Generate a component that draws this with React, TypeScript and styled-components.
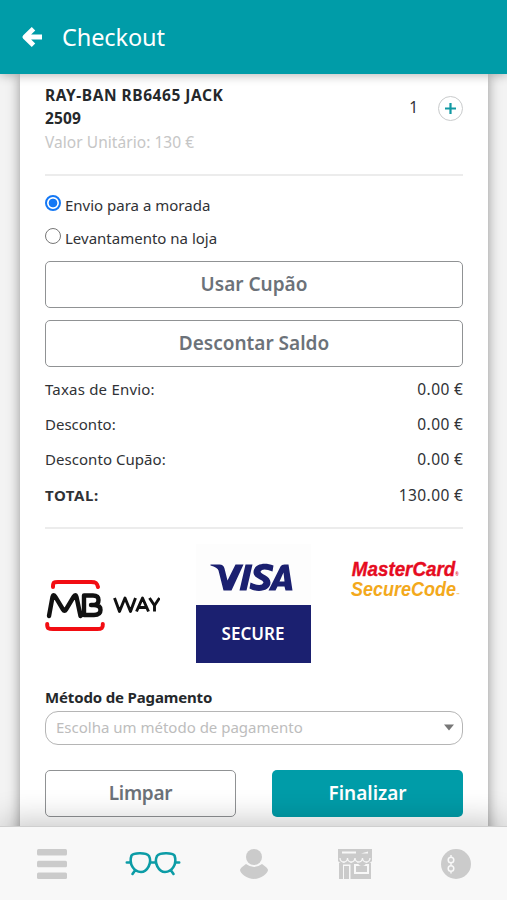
import React from "react";
import styled, { createGlobalStyle } from "styled-components";

const Global = createGlobalStyle`
  * { box-sizing: border-box; }
  body { margin: 0; background: #f4f4f4; font-family: "Noto Sans", "Open Sans", sans-serif; color: #303236; }
  button { font-family: inherit; }
`;
const Screen = styled.div`
  width: 507px; height: 900px; overflow: hidden;
  display: grid; grid-template-rows: 74px 752px 74px;
`;
const Header = styled.header`
  background: #009ca8; color: #fff; display: flex; align-items: center;
  padding-left: 21px; gap: 19px; z-index: 2; box-shadow: 0 1px 10px rgba(0,0,0,.3);
`;
const Title = styled.h1`
  margin: 0; font-size: 23.5px; font-weight: 400; line-height: 32px; letter-spacing: -.1px; padding-bottom: 1px;
`;
const Main = styled.main`
  padding: 0 19px 0 20px; overflow: hidden; background: #f3f3f3;
`;
const Card = styled.section`
  height: 800px; padding: 10px 25px 0; background: #fff;
  box-shadow: 0 0 12px rgba(0,0,0,.4);
`;
const Product = styled.div`
  display: flex; height: 70px; justify-content: space-between;
`;
const ProductName = styled.div`
  width: 200px; font-size: 15.5px; font-weight: 700; line-height: 23px; letter-spacing: .54px;
  white-space: nowrap; color: #25282b;
`;
const ModelCode = styled.div`letter-spacing: .1px;`;
const UnitPrice = styled.div`
  color: #c6c6c6; font-weight: 400; letter-spacing: .05px; padding-top: 1px;
`;
const Quantity = styled.div`
  display: flex; align-items: center; gap: 20px; height: 48px; font-size: 15.5px;
  span { margin-top: -2px; }
`;
const AddButton = styled.button`
  width: 25px; height: 25px; padding: 0; border: 1px solid #c9cbcc; border-radius: 50%;
  background: #fff; display: grid; place-items: center; margin-top: 1px;
`;
const Rule = styled.hr<{ $top: number; $bottom: number }>`
  height: 2px; border: 0; background: #ececec; margin: ${p => p.$top}px 0 ${p => p.$bottom}px;
`;
const Option = styled.label`
  display: flex; align-items: center; height: 33px; gap: 4px; font-size: 15px; padding-bottom: 1px;
`;
const Radio = styled.span<{ $checked?: boolean }>`
  width: 16px; height: 16px; border-radius: 50%; margin-top: -4px;
  border: ${p => (p.$checked ? "2px solid #1478f5" : "1px solid #777")};
  background: ${p => (p.$checked ? "radial-gradient(circle, #1478f5 0 4px, #fff 4.7px)" : "#fff")};
`;
const Button = styled.button<{ $primary?: boolean; $spacing?: number }>`
  display: flex; align-items: center; justify-content: center; width: 100%; height: 47px;
  padding: 0 0 2px; border-radius: 5px; font-size: 19px; font-weight: 600;
  letter-spacing: ${p => p.$spacing ?? 0}px;
  color: ${p => (p.$primary ? "#fff" : "#6c7279")};
  background: ${p => (p.$primary ? "#009ca8" : "transparent")};
  border: ${p => (p.$primary ? "0" : "1.5px solid #909294")};
`;
const Discounts = styled.div`
  display: grid; gap: 12px; padding-top: 6px;
`;
const Totals = styled.dl`
  margin: 4px 0 0; display: grid; grid-auto-rows: 35.3px;
`;
const TotalRow = styled.div<{ $bold?: boolean; $spacing: number }>`
  display: flex; align-items: center; justify-content: space-between; font-size: 15px;
  dt { font-weight: ${p => (p.$bold ? 700 : 400)}; letter-spacing: ${p => p.$spacing}px; }
  dd { margin: 0 -.4px 0 0; font-size: 15.5px; letter-spacing: .4px; }
`;
const Logos = styled.div`
  display: flex; height: 118px; align-items: flex-start;
`;
const MbWay = styled.svg`margin: 35px 0 0; display: block;`;
const Visa = styled.div`width: 115px; margin-left: 35.5px; background: #fdfdfd;`;
const VisaMark = styled.svg`display: block;`;
const Secure = styled.div`
  height: 58px; background: #1b2070; color: #fff; display: grid; place-items: center;
  font-size: 17px; font-weight: 600; padding-bottom: 1px;
`;
const MasterCard = styled.svg`margin: 12px 0 0 40.5px; display: block; overflow: visible;`;
const FieldLabel = styled.div`
  height: 24px; line-height: 24px; margin-top: 23px; font-size: 15px; font-weight: 700; letter-spacing: -.15px;
  color: #25282b;
`;
const Select = styled.div`
  margin-top: 2px; height: 34px; border: 1px solid #b5b5b5; border-radius: 13px; background: #fff;
  display: flex; align-items: center; justify-content: space-between; padding: 0 8px 2px 10px;
  font-size: 15px; color: #bdbdbd;
`;
const Actions = styled.div`
  display: grid; grid-template-columns: 191px 191px; justify-content: space-between; margin-top: 25px;
`;
const Nav = styled.nav`
  z-index: 2; background: #f8f8f8; border-top: 1px solid #cfcfcf;
  box-shadow: 0 -4px 32px rgba(0,0,0,.24);
  display: grid; grid-template-columns: repeat(5, 101.2px); place-items: center; padding: 1px 0 0 1px;
`;

const totals = [
  { label: "Taxas de Envio:", value: "0.00 €", spacing: 0.2 },
  { label: "Desconto:", value: "0.00 €", spacing: 0 },
  { label: "Desconto Cupão:", value: "0.00 €", spacing: 0.05 },
  { label: "TOTAL:", value: "130.00 €", spacing: 0.55, bold: true },
];

export default function App() {
  return (
    <>
      <Global />
      <Screen>
        <Header>
          <svg width="22" height="24" viewBox="0 0 22 24" fill="none" stroke="#fff" strokeWidth="5">
            <path d="M4 12H21M12.5 3.8 4 12l8.500 8.200" strokeLinejoin="round" />
          </svg>
          <Title>Checkout</Title>
        </Header>
        <Main>
          <Card>
            <Product>
              <ProductName>
                RAY-BAN RB6465 JACK
                <ModelCode>2509</ModelCode>
                <UnitPrice>Valor Unitário: 130 €</UnitPrice>
              </ProductName>
              <Quantity>
                <span>1</span>
                <AddButton aria-label="+">
                  <svg width="11" height="11" stroke="#1299a3" strokeWidth="2.2"><path d="M0 5.5h11M5.5 0v11" /></svg>
                </AddButton>
              </Quantity>
            </Product>
            <Rule $top={20} $bottom={13} />
            <Option><Radio $checked />Envio para a morada</Option>
            <Option><Radio />Levantamento na loja</Option>
            <Discounts>
              <Button>Usar Cupão</Button>
              <Button>Descontar Saldo</Button>
            </Discounts>
            <Totals>
              {totals.map(t => (
                <TotalRow key={t.label} $bold={t.bold} $spacing={t.spacing}><dt>{t.label}</dt><dd>{t.value}</dd></TotalRow>
              ))}
            </Totals>
            <Rule $top={15} $bottom={15} />
            <Logos>
              <MbWay width="116" height="54" fill="none" strokeLinecap="round" strokeLinejoin="round">
                <path d="M8 8C8 3 9 3 13 3H46C51 3 52 4 53 8M2.2 45C2 50 4 50 8 50H52C57 50 58 49 57.8 45" stroke="#f20d12" strokeWidth="4" />
                <path d="M4 37 7.500 18Q8.5 14.500 10.5 18L18 30.500Q19.500 33 21 30.500L28.5 18Q30.500 14.500 31.500 18L35.500 37M39 16.500V36H49Q55.500 36 55.500 31Q55.500 26 49 26H46M39 16.500H48Q53.500 16.500 53.500 21Q53.500 26 49 26" stroke="#111" strokeWidth="4.4" />
                <path d="M69.500 19 74.500 32.500 80 19 85.500 32.500 90.500 19M91.500 32.500 97.500 19 103.500 32.500M94 28.500H101M104.500 19 109.500 26.500 114.500 19M109.500 26.500V32.500" stroke="#111" strokeWidth="2.9" strokeLinecap="butt" />
              </MbWay>
              <Visa>
                <VisaMark width="115" height="61" viewBox="-.5 -1.5 115 61" fill="#1b2070">
                  <path d="M14 19H23Q27 19 28 23L31 35 39 19H47L35 45H27L22 25Q21 22 14 20ZM49 19H56L50 45H43ZM77 20 76 26Q66 22 64 26C64 29 74 30 74 37C74 45 62 48 53 43L54 37Q65 42 67 37C67 34 57 33 57 27C57 19 67 16 77 20ZM72 45 84 21Q85 19 88 19H92L96 45H89L88 41H81L79 45ZM83 36H88L87 27Z" fillRule="evenodd" />
                </VisaMark>
                <Secure>SECURE</Secure>
              </Visa>
              <MasterCard width="112" height="44" fontFamily="Liberation Sans" fontStyle="italic" fontWeight="700">
                <g transform="scale(.86 1)" fontSize="21">
                  <text x="1" y="20" fill="#e60b20" stroke="#e60b20" strokeWidth=".4" textLength="124" lengthAdjust="spacingAndGlyphs">MasterCard<tspan fontSize="5" strokeWidth="0">®</tspan></text>
                  <text x="0" y="40.5" fill="#f3a91c" textLength="126" lengthAdjust="spacingAndGlyphs">SecureCode<tspan fontSize="4">™</tspan></text>
                </g>
              </MasterCard>
            </Logos>
            <FieldLabel>Método de Pagamento</FieldLabel>
            <Select>
              Escolha um método de pagamento
              <svg width="10" height="8" fill="#777"><path d="M0 1.500H10L5 7.500Z" /></svg>
            </Select>
            <Actions><Button $spacing={-0.3}>Limpar</Button><Button $primary>Finalizar</Button></Actions>
          </Card>
        </Main>
        <Nav>
          <svg width="30" height="30" fill="#cbcbcb"><rect width="30" height="6.5" rx="1.5" /><rect y="11.7" width="30" height="6.5" rx="1.5" /><rect y="23.5" width="30" height="6.500" rx="1.5" /></svg>
          <svg width="56" height="26" viewBox="0 0 56 26" fill="none" stroke="#0c9ca6" strokeWidth="2.6" strokeLinecap="round">
            <path d="M6.500 4.500C9 1.500 21 1.500 24 5C27.500 12 22 21 16 21C9 21 3.500 13 6.500 4.500ZM32 5C35 1.500 47 1.500 49.500 4.500C52.500 13 47 21 40 21C34 21 28.500 12 32 5ZM25.5 11.500H30.5M1.8 11.500H4.500M51.500 11.500H54.200M10 19.500 7.500 23M46 19.500 48.500 23" />
          </svg>
          <svg width="28" height="30" fill="#cbcbcb"><circle cx="14" cy="8" r="8" /><path d="M6 15Q14 21 22 15Q28 19 28 21C28 24 21 30 14 30S0 24 0 21Q0 19 6 15Z" /></svg>
          <svg width="34" height="30" viewBox="0 0 34 30" fill="#cbcbcb">
            <path fillRule="evenodd" d="M0 0H34V6.500H0ZM4 2.500V4.500H18V2.500ZM23 4.500H30V2.500ZM1 14H33V30H12.500V15.500H5V30H1ZM16 15V25H31V15Z" />
            <path d="M0 6H34V12A4 4 0 0 1 28 13 4 4 0 0 1 20 13 4 4 0 0 1 13 13 4 4 0 0 1 6 13 4 4 0 0 1 0 12Z" />
            <path d="M2 9a3.750 4 0 0 0 7.5 0a3.750 4 0 0 0 7.5 0a3.750 4 0 0 0 7.5 0a3.750 4 0 0 0 7.5 0" fill="none" stroke="#f8f8f8" strokeWidth="1.300" />
            <path d="M6 17H11V30H6ZM18 17H29V23H18Z" />
          </svg>
          <svg width="30" height="30"><circle cx="15" cy="15" r="15" fill="#cbcbcb" /><g fill="none" stroke="#f8f8f8" strokeWidth="1.5"><circle cx="10" cy="11" r="2.8" /><circle cx="10" cy="19.5" r="2.8" /><path d="M10 6V8M10 22.5V24.5M10 14V16.5" /></g></svg>
        </Nav>
      </Screen>
    </>
  );
}
